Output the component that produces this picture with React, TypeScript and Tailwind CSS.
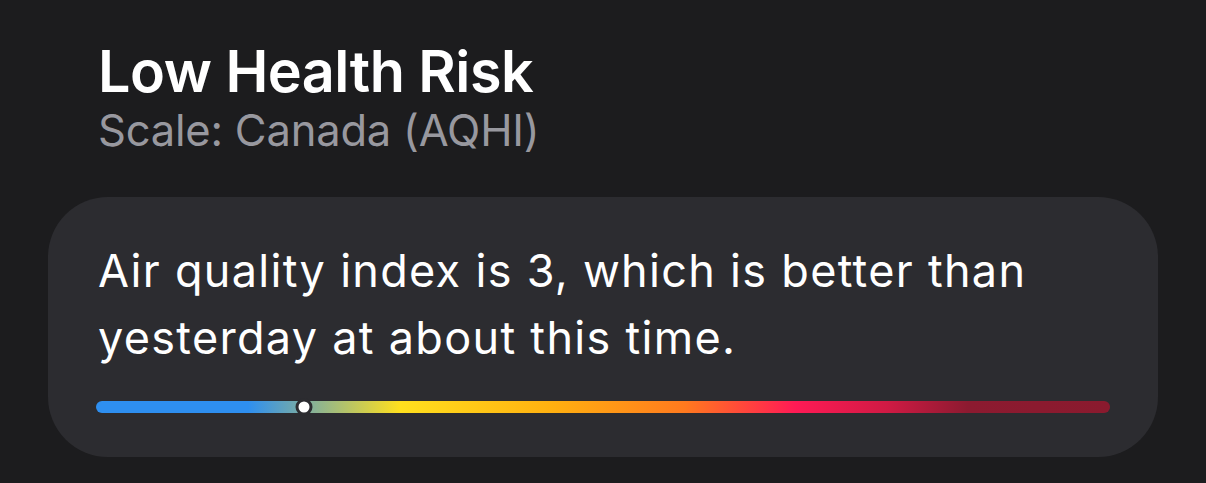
import React from "react";

const AQHI = 3;

export default function App() {
  // where the current reading lands on the 1–10+ scale
  const pos = 20.5;

  return (
    <div className="w-[1206px] h-[483px] bg-[#1c1c1e] overflow-hidden font-['Inter',sans-serif] antialiased">
      <div className="pl-[98px] pt-[36px]">
        <h1 className="text-[57.5px] leading-[70px] font-semibold tracking-[-0.5px] text-white">Low Health Risk</h1>
        <p className="text-[43.5px] leading-[48px] text-[#98989f] tracking-[-0.2px]">Scale: Canada (AQHI)</p>
      </div>

      <div className="mx-[48px] mt-[43px] h-[260px] rounded-[60px] bg-[#2c2c30] px-[50px] pt-[40px]">
        <p className="text-[45px] leading-[67px] text-white tracking-[1.3px]">
          Air quality index is {AQHI}, which is better than
          <br />
          yesterday at about this time.
        </p>

        <div className="relative -mx-[2px] mt-[30px] h-[12px] rounded-full bg-[linear-gradient(90deg,#2e8ff0_0%,#2e8ff0_15%,#ffe01e_30%,#ffb010_45%,#ff7a1e_58%,#ff1a55_69%,#d01a44_78%,#8c1a30_86%,#8a1a2e_100%)]">
          <span
            className="absolute top-1/2 -translate-x-1/2 -translate-y-1/2 w-[17px] h-[17px] rounded-full bg-white border-[3px] border-[#2c2c30]"
            style={{ left: `${pos}%` }}
          />
        </div>
      </div>
    </div>
  );
}
